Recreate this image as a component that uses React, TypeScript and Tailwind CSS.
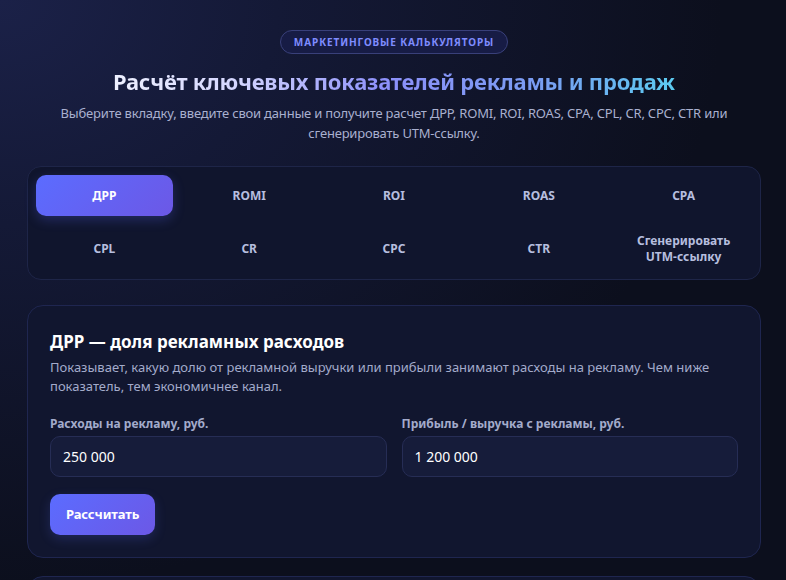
import React, { useState } from "react";

const tabs = ["ДРР", "ROMI", "ROI", "ROAS", "CPA", "CPL", "CR", "CPC", "CTR", "UTM"];

export default function App() {
  const [active, setActive] = useState(0);
  return (
    <div className="min-h-[580px] w-full overflow-hidden bg-[#0c0f1d] bg-[radial-gradient(ellipse_at_0%_0%,#1b2148_0%,#141936_25%,#0c0f1d_65%)] font-['Noto_Sans',sans-serif] text-white">
      <div className="mx-auto flex max-w-[786px] flex-col pl-[27px] pr-[25px] pt-[30px]">
        <div className="flex justify-center">
          <span className="rounded-full border border-[#39407a] bg-[#171c45] px-[13px] py-[4px] text-[10px] font-bold leading-[14px] tracking-[0.09em] text-[#7f8cff]">
            МАРКЕТИНГОВЫЕ КАЛЬКУЛЯТОРЫ
          </span>
        </div>
        <h1 className="mt-[12px] text-center text-[22px] font-bold leading-[30px] tracking-[-0.01em]">
          <span className="bg-[linear-gradient(90deg,#eef0ff_0%,#d4d6ff_22%,#8d90fa_48%,#7a9cf2_75%,#5ccbf0_100%)] bg-clip-text text-transparent">
            Расчёт ключевых показателей рекламы и продаж
          </span>
        </h1>
        <p className="mx-auto mt-[7px] max-w-[700px] text-center text-[13px] leading-[20px] tracking-[-0.015em] text-[#a9b0cf]">
          Выберите вкладку, введите свои данные и получите расчет ДРР, ROMI, ROI, ROAS, CPA, CPL, CR, CPC, CTR или сгенерировать UTM-ссылку.
        </p>

        <div className="mt-[23px] grid grid-cols-5 gap-x-[8px] gap-y-[11px] rounded-[14px] border border-[#1e2548] bg-[#10152d] p-[8px]">
          {tabs.map((t, i) => (
            <button
              key={t}
              onClick={() => setActive(i)}
              className={
                i === active
                  ? "flex min-h-[41px] items-center justify-center rounded-[10px] bg-[linear-gradient(135deg,#5b6cff,#6c58e6)] px-2 py-[6px] text-[12px] font-bold leading-[16px] text-white shadow-[0_4px_12px_rgba(91,108,255,0.25)]"
                  : "flex min-h-[41px] items-center justify-center rounded-[10px] px-2 py-[6px] text-center text-[12px] font-bold leading-[16px] text-[#b6bedf]"
              }
            >
              {t === "UTM" ? (
                <span className="flex flex-col items-center">
                  <span>Сгенерировать</span>
                  <span>UTM-ссылку</span>
                </span>
              ) : (
                t
              )}
            </button>
          ))}
        </div>

        <div className="mt-[25px] rounded-[16px] border border-[#1f2650] bg-[#11162f] px-[22px] pb-[22px] pt-[24px]">
          <h2 className="text-[17px] font-bold leading-[24px] text-white">ДРР — доля рекламных расходов</h2>
          <p className="mt-[4px] text-[13px] leading-[19px] text-[#a3abcb]">
            Показывает, какую долю от рекламной выручки или прибыли занимают расходы на рекламу. Чем ниже показатель, тем экономичнее канал.
          </p>
          <div className="mt-[20px] grid grid-cols-2 gap-[15px]">
            <label className="flex flex-col">
              <span className="text-[12px] font-bold leading-[16px] text-[#a3abcb]">Расходы на рекламу, руб.</span>
              <input
                defaultValue="250 000"
                className="mt-[4px] h-[41px] rounded-[10px] border border-[#262d55] bg-[#161c3a] px-[12px] text-[14px] text-white outline-none"
              />
            </label>
            <label className="flex flex-col">
              <span className="text-[12px] font-bold leading-[16px] text-[#a3abcb]">Прибыль / выручка с рекламы, руб.</span>
              <input
                defaultValue="1 200 000"
                className="mt-[4px] h-[41px] rounded-[10px] border border-[#262d55] bg-[#161c3a] px-[12px] text-[14px] text-white outline-none"
              />
            </label>
          </div>
          <button className="mt-[17px] h-[41px] rounded-[10px] bg-[linear-gradient(135deg,#5b6cff,#6c58e6)] px-[16px] text-[13px] font-bold tracking-[-0.01em] text-white shadow-[0_4px_12px_rgba(91,108,255,0.2)]">
            Рассчитать
          </button>
        </div>

        <div className="mt-[18px] h-[60px] rounded-t-[16px] border border-[#1f2650] bg-[#11162f]" />
      </div>
    </div>
  );
}
